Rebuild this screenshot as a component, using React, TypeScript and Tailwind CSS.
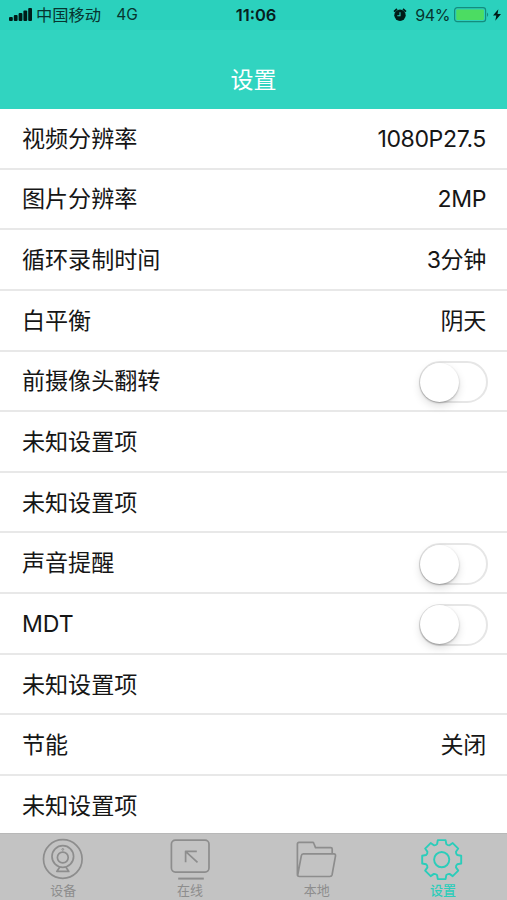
import React from "react";

type Row = { label: string; value?: string; toggle?: boolean };

const rows: Row[] = [
  { label: "视频分辨率", value: "1080P27.5" },
  { label: "图片分辨率", value: "2MP" },
  { label: "循环录制时间", value: "3分钟" },
  { label: "白平衡", value: "阴天" },
  { label: "前摄像头翻转", toggle: true },
  { label: "未知设置项" },
  { label: "未知设置项" },
  { label: "声音提醒", toggle: true },
  { label: "MDT", toggle: true },
  { label: "未知设置项" },
  { label: "节能", value: "关闭" },
  { label: "未知设置项" },
];

function Toggle() {
  return (
    <span className="flex h-[42px] w-[69px] items-center rounded-full border-2 border-[#e6e6e6] bg-white">
      <span className="-ml-px size-[39px] rounded-full bg-white shadow-[0_4px_8px_rgba(0,0,0,0.13),0_1px_2px_rgba(0,0,0,0.28)]" />
    </span>
  );
}

// Outline of an eight-toothed gear centred on the origin.
function gearPath(): string {
  const tooth: [number, number][] = [
    [-4.6, -15.6],
    [-3.9, -19.5],
    [3.9, -19.5],
    [4.6, -15.6],
  ];
  let d = "";
  let start = "";
  for (let i = 0; i < 8; i++) {
    const a = (i * Math.PI) / 4;
    const p = tooth.map(([x, y]) => {
      const px = x * Math.cos(a) - y * Math.sin(a);
      const py = x * Math.sin(a) + y * Math.cos(a);
      return `${px.toFixed(2)} ${py.toFixed(2)}`;
    });
    if (i === 0) start = p[0];
    d += i === 0 ? `M${p[0]}` : `A3.6 3.6 0 0 0 ${p[0]}`;
    d += `L${p[1]}L${p[2]}L${p[3]}`;
  }
  return `${d}A3.6 3.6 0 0 0 ${start}Z`;
}

const iconProps = {
  width: 44,
  height: 44,
  viewBox: "0 0 44 44",
  fill: "none",
  stroke: "currentColor",
  strokeLinejoin: "round" as const,
};

const tabs: { label: string; active?: boolean; icon: React.ReactNode }[] = [
  {
    label: "设备",
    icon: (
      <svg {...iconProps} strokeWidth="1.7">
        <circle cx="21.8" cy="22" r="19.3" />
        <circle cx="21.8" cy="19.5" r="10.8" />
        <circle cx="21.8" cy="20.5" r="5.4" />
        <circle cx="21.8" cy="12.4" r="0.9" strokeWidth="1" />
        <path d="M18.8 30l-3 4.4h12l-3-4.4" />
      </svg>
    ),
  },
  {
    label: "在线",
    icon: (
      <svg {...iconProps} strokeWidth="1.7">
        <rect x="3.4" y="3.1" width="37.6" height="32" rx="4" />
        <path d="M17.6 25.2V14.3h11.2M18.1 14.8l11.4 10.6" />
        <path d="M10.2 41.6h25.6" strokeWidth="2" />
      </svg>
    ),
  },
  {
    label: "本地",
    icon: (
      <svg {...iconProps} strokeWidth="1.7">
        <path d="M37.2 16.9V12.1Q37.2 10.6 35.7 10.6H20.5L18.8 6.3Q18.5 5.4 17.6 5.4H4Q2.4 5.4 2.4 7V37.6Q2.4 39.5 4.3 39.5H34.9Q36.7 39.5 37.1 37.7L40.5 18.8Q40.7 16.9 38.9 16.9H8.4Q6.6 16.9 6.3 18.8L2.7 38" />
      </svg>
    ),
  },
  {
    label: "设置",
    active: true,
    icon: (
      <svg {...iconProps} strokeWidth="1.9">
        <g transform="translate(20.7 22.6)">
          <path d={gearPath()} />
          <circle r="7.6" />
        </g>
      </svg>
    ),
  },
];

export default function App() {
  return (
    <div className="flex h-[900px] w-[507px] flex-col overflow-hidden bg-white font-[Inter,'Noto_Sans_CJK_SC',sans-serif] text-[#161616]">
      <header className="h-[109px] shrink-0 bg-[#31d4c0]">
        <div className="grid h-[30px] grid-cols-3 items-center bg-[#2bd1bd] pr-[6px] pl-[9px] text-[15px] leading-none text-[#07352f]">
          <div className="flex items-center whitespace-nowrap">
            <svg width="24" height="14" viewBox="0 0 24 14" fill="#001c18">
              <rect x="0" y="9" width="3.8" height="4" rx="1" />
              <rect x="4.8" y="7" width="3.8" height="6" rx="1" />
              <rect x="9.6" y="5" width="3.8" height="8" rx="1" />
              <rect x="14.4" y="2.5" width="3.8" height="10.5" rx="1" />
              <rect x="19.2" y="0" width="3.8" height="13" rx="1" />
            </svg>
            <span className="ml-[3px] text-[16.3px]">中国移动</span>
            <span className="ml-[15px] text-[15.5px]">4G</span>
          </div>
          <div className="pl-[2px] text-center text-[16.5px] font-semibold text-[#06201d]">11:06</div>
          <div className="flex items-center justify-end whitespace-nowrap">
            <svg width="14" height="14" viewBox="0 0 14 14">
              <circle cx="7" cy="7.2" r="5.7" fill="#001c18" />
              <path d="M1 3.6L4 1M13 3.6L10 1" stroke="#001c18" strokeWidth="1.7" />
              <path d="M7 4.2v3.6H4.3" fill="none" stroke="#2bd1bd" strokeWidth="1.1" />
            </svg>
            <span className="ml-[8px] text-[16px] tracking-[-0.4px]">94%</span>
            <svg className="ml-[4px]" width="37" height="16" viewBox="0 0 37 16">
              <rect x="0.6" y="0.7" width="31" height="14" rx="2.6" fill="none" stroke="#148d7e" strokeWidth="1.2" />
              <rect x="2.3" y="2.4" width="27.6" height="10.6" rx="1" fill="#4cdc62" />
              <path d="M33 5.5q2.4 2.2 0 4.4z" fill="#148d7e" />
            </svg>
            <svg className="ml-[2px]" width="8" height="12" viewBox="0 0 9 13">
              <path d="M6 0L0 7.2h3.7L2.6 13 9 5.3H5.1z" fill="#001c18" />
            </svg>
          </div>
        </div>
        <h1 className="flex h-[79px] items-center justify-center pt-[22px] text-[23px] leading-none text-white">设置</h1>
      </header>

      <main className="min-h-0 flex-1 overflow-hidden">
        {rows.map((row, i) => (
          <div
            key={i}
            className="flex h-[60.65px] items-center justify-between border-b-2 border-[#e8e8e8] pt-[2px] pr-[20px] pl-[22px] text-[23.1px] leading-none"
          >
            <span className="tracking-[-0.05px]">{row.label}</span>
            {row.value && <span className="pr-px tracking-[-0.4px]">{row.value}</span>}
            {row.toggle && (
              <span className="-mr-px pt-px">
                <Toggle />
              </span>
            )}
          </div>
        ))}
      </main>

      <nav className="grid h-[67px] shrink-0 grid-cols-4 border-t border-[#b8b8b8] bg-[#c3c3c3]">
        {tabs.map((tab) => (
          <div
            key={tab.label}
            className={`flex flex-col items-center pt-[3px] text-[13px] leading-none ${
              tab.active ? "pr-px font-medium text-[#2bcdba]" : "text-[#8d8d8d]"
            }`}
          >
            {tab.icon}
            <span className="mt-[3px]">{tab.label}</span>
          </div>
        ))}
      </nav>
    </div>
  );
}
